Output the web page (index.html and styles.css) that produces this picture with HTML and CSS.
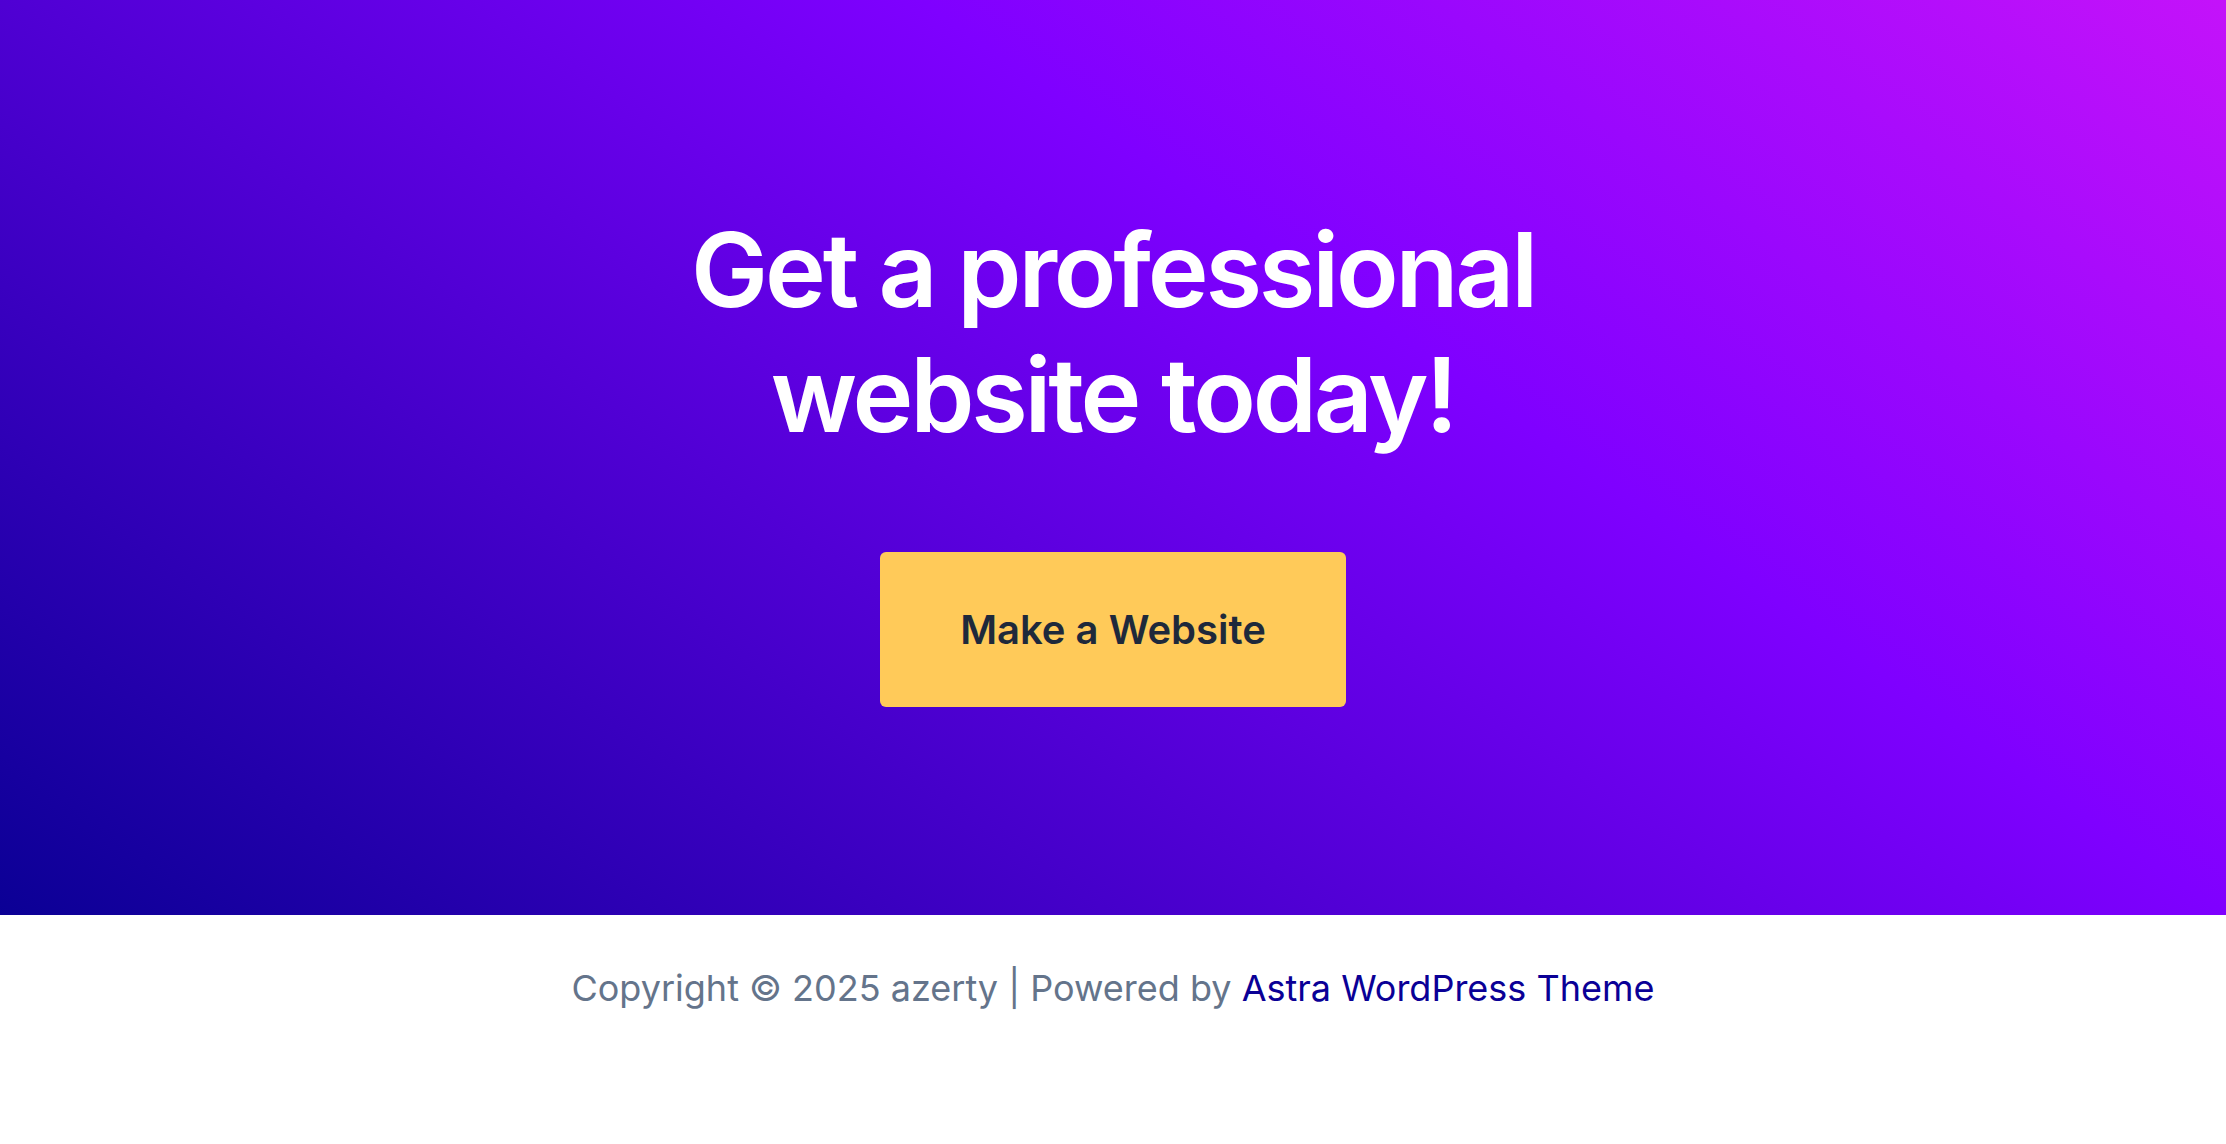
FILE: index.html
```html
<!DOCTYPE html>
<html lang="en">
<head>
<meta charset="utf-8">
<title>Get a professional website today!</title>
<link rel="stylesheet" href="styles.css">
</head>
<body>
<main class="hero">
  <div class="hero-inner">
    <h1 class="hero-title">Get a professional<br>website today!</h1>
    <a class="hero-btn" href="#">Make a Website</a>
  </div>
</main>
<footer class="site-footer">
  <p class="footer-text">Copyright © 2025 azerty | Powered by <a class="footer-link" href="#">Astra WordPress Theme</a></p>
</footer>
</body>
</html>
```

FILE: styles.css
```css
html, body {
  margin: 0;
  padding: 0;
  background: #ffffff;
}

body {
  font-family: Inter, "Liberation Sans", sans-serif;
}

.hero {
  height: 915px;
  display: flex;
  align-items: center;
  justify-content: center;
  background-image: linear-gradient(35deg, #0b0095 0%, #7f00ff 63%, #c412fa 100%);
}

.hero-inner {
  display: flex;
  flex-direction: column;
  align-items: center;
  margin-top: -2px;
}

.hero-title {
  margin: 0 0 95px;
  color: #ffffff;
  font-family: Inter, "Liberation Sans", sans-serif;
  font-weight: 600;
  font-size: 103px;
  line-height: 125px;
  letter-spacing: -3.2px;
  text-align: center;
}

.hero-btn {
  display: flex;
  align-items: center;
  justify-content: center;
  width: 466px;
  height: 155px;
  box-sizing: border-box;
  background: #ffca59;
  border-radius: 6px;
  color: #1e293b;
  font-size: 40px;
  font-weight: 600;
  text-decoration: none;
}

.site-footer {
  height: 229px;
  display: flex;
  justify-content: center;
  padding-top: 46px;
  box-sizing: border-box;
}

.footer-text {
  margin: 0;
  color: #64748b;
  font-size: 36px;
  line-height: 54px;
}

.footer-link {
  color: #0a0096;
  text-decoration: none;
}
```
